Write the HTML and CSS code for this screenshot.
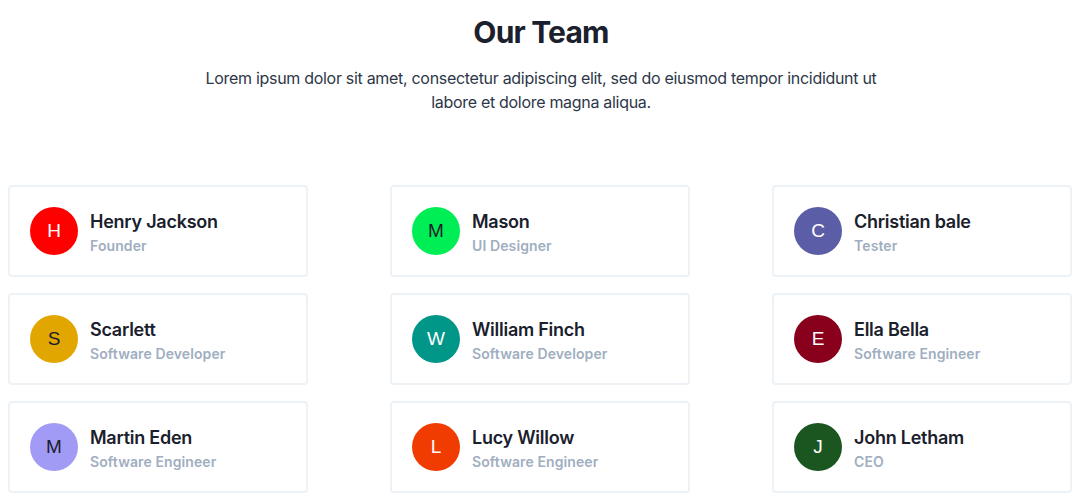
FILE: index.html
```html
<!DOCTYPE html>
<html lang="en">
<head>
<meta charset="utf-8">
<title>Our Team</title>
<link rel="stylesheet" href="styles.css">
</head>
<body>
<section class="team">
  <header class="team-head">
    <h2 class="team-title">Our Team</h2>
    <p class="team-lead">Lorem ipsum dolor sit amet, consectetur adipiscing elit, sed do eiusmod tempor incididunt ut labore et dolore magna aliqua.</p>
  </header>
  <div class="team-grid">
    <div class="card"><span class="avatar av-red">H</span><div class="info"><div class="name">Henry Jackson</div><div class="role">Founder</div></div></div>
    <div class="card"><span class="avatar av-green dark">M</span><div class="info"><div class="name">Mason</div><div class="role">UI Designer</div></div></div>
    <div class="card"><span class="avatar av-indigo">C</span><div class="info"><div class="name">Christian bale</div><div class="role">Tester</div></div></div>
    <div class="card"><span class="avatar av-gold dark">S</span><div class="info"><div class="name">Scarlett</div><div class="role">Software Developer</div></div></div>
    <div class="card"><span class="avatar av-teal">W</span><div class="info"><div class="name">William Finch</div><div class="role">Software Developer</div></div></div>
    <div class="card"><span class="avatar av-maroon">E</span><div class="info"><div class="name">Ella Bella</div><div class="role">Software Engineer</div></div></div>
    <div class="card"><span class="avatar av-lavender dark">M</span><div class="info"><div class="name">Martin Eden</div><div class="role">Software Engineer</div></div></div>
    <div class="card"><span class="avatar av-orange">L</span><div class="info"><div class="name">Lucy Willow</div><div class="role">Software Engineer</div></div></div>
    <div class="card"><span class="avatar av-forest">J</span><div class="info"><div class="name">John Letham</div><div class="role">CEO</div></div></div>
  </div>
</section>
</body>
</html>
```
FILE: styles.css
```css
* { box-sizing: border-box; }
html, body { background: #ffffff; }
body {
  margin: 8px;
  font-family: Inter, "Noto Sans", "Liberation Sans", sans-serif;
  color: #1a202c;
}
.team-head {
  text-align: center;
  padding-top: 6px;
}
.team-title {
  margin: 0;
  font-size: 30px;
  line-height: 36px;
  font-weight: 700;
  letter-spacing: -0.8px;
  color: #1a202c;
}
.team-lead {
  max-width: 672px;
  margin: 16px auto 0;
  font-size: 16px;
  line-height: 24px;
  letter-spacing: -0.3px;
  color: #2d3748;
}
.team-grid {
  margin-top: 71px;
  display: grid;
  grid-template-columns: repeat(3, 300px);
  column-gap: 82px;
  row-gap: 16px;
}
.card {
  display: flex;
  align-items: center;
  height: 92px;
  padding: 0 20px;
  border: 2px solid #edf2f7;
  border-radius: 4px;
  background: #fff;
}
.avatar {
  flex: none;
  width: 48px;
  height: 48px;
  border-radius: 50%;
  display: flex;
  align-items: center;
  justify-content: center;
  font-family: "Liberation Sans", Arial, sans-serif;
  font-size: 19px;
  color: #ffffff;
}
.avatar.dark { color: #1a202c; }
.info { margin-left: 12px; padding-top: 2px; }
.name {
  font-size: 18px;
  line-height: 28px;
  font-weight: 600;
  letter-spacing: -0.25px;
  color: #1a202c;
}
.role {
  font-size: 14px;
  line-height: 20px;
  font-weight: 600;
  letter-spacing: 0.1px;
  color: #a0aec0;
}
.av-red { background: #ff0000; }
.av-green { background: #00ee55; }
.av-indigo { background: #5b5ea6; }
.av-gold { background: #e2a600; }
.av-teal { background: #009688; }
.av-maroon { background: #88001b; }
.av-lavender { background: #a29bf6; }
.av-orange { background: #f03c00; }
.av-forest { background: #1b5520; }
```
